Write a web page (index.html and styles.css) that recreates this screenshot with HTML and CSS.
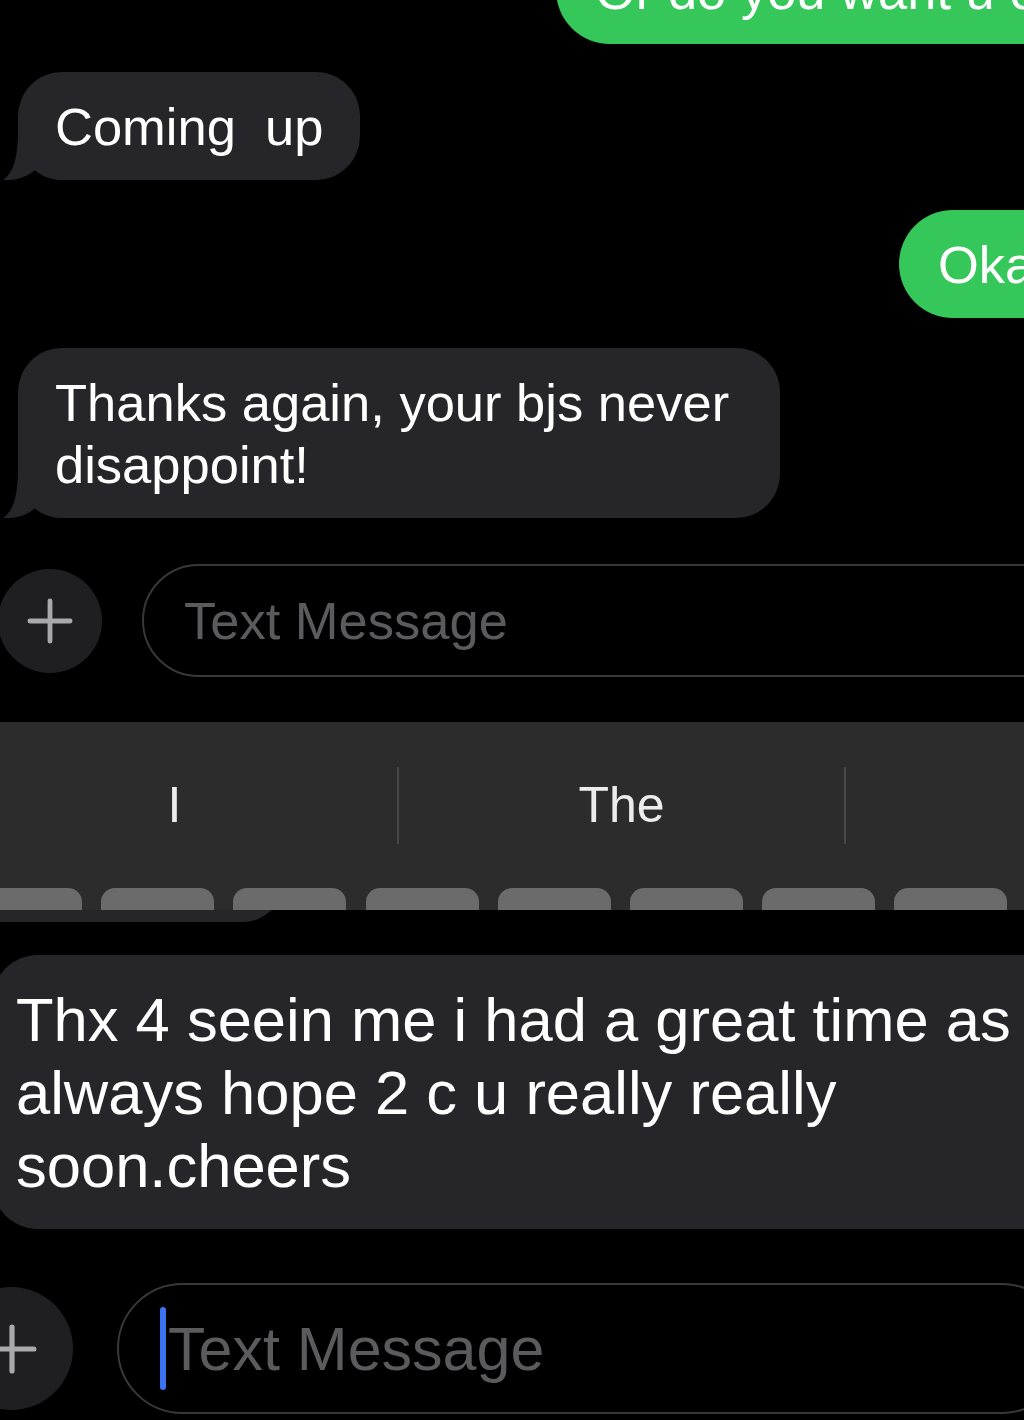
FILE: index.html
```html
<!DOCTYPE html>
<html lang="en">
<head>
    <meta charset="UTF-8">
    <meta name="viewport" content="width=device-width, initial-scale=1.0">
    <title>Messages</title>
    <link rel="stylesheet" href="styles.css">
</head>
<body>
    <div class="shot shot-top">
        <div class="thread">
            <div class="bubble out first">Or do you want u come to me</div>
            <div class="bubble in coming">
                Coming&nbsp; up
                <svg class="tail" viewBox="0 0 60 52" width="60" height="52"><path d="M16 0 C16 30 12 44 1 52 C14 53 26 49 34 41 C40 48 50 52 60 52 L60 0 Z"/></svg>
            </div>
            <div class="bubble out okay">Okay</div>
            <div class="bubble in thanks">
                Thanks again, your bjs never<br>disappoint!
                <svg class="tail" viewBox="0 0 60 52" width="60" height="52"><path d="M16 0 C16 30 12 44 1 52 C14 53 26 49 34 41 C40 48 50 52 60 52 L60 0 Z"/></svg>
            </div>
        </div>

        <div class="composer">
            <div class="plus">
                <svg viewBox="0 0 48 48" width="46" height="46"><path d="M24 3v42M3 24h42"/></svg>
            </div>
            <div class="field">Text Message</div>
        </div>

        <div class="suggest">
            <div class="word first-word">I</div>
            <div class="sep"></div>
            <div class="word">The</div>
            <div class="sep"></div>
            <div class="word"></div>
        </div>

        <div class="keys">
            <span class="key first-key"></span>
            <span class="key"></span>
            <span class="key"></span>
            <span class="key"></span>
            <span class="key"></span>
            <span class="key"></span>
            <span class="key"></span>
            <span class="key"></span>
        </div>
    </div>

    <div class="shot shot-bottom">
        <div class="prev"></div>
        <div class="bubble in big">Thx 4 seein me i had a great time as<br>always hope 2 c u really really<br>soon.cheers</div>

        <div class="composer composer-lg">
            <div class="plus">
                <svg viewBox="0 0 48 48" width="50" height="50"><path d="M24 3v42M3 24h42"/></svg>
            </div>
            <div class="field">
                <span class="cursor"></span>Text Message
            </div>
        </div>
    </div>
</body>
</html>
```

FILE: styles.css
```css
* {
    box-sizing: border-box;
}

body {
    margin: 0;
    width: 1024px;
    height: 1420px;
    overflow: hidden;
    background: #000;
    color: #fff;
    font-family: "Liberation Sans", Arial, sans-serif;
}

.shot {
    overflow: hidden;
}

.shot-top {
    height: 910px;
}

.shot-bottom {
    height: 510px;
}

/* message thread */
.thread {
    display: flex;
    flex-direction: column;
    align-items: flex-start;
}

.bubble {
    position: relative;
    z-index: 0;
    flex: none;
    padding: 24px 37px 22px;
    border-radius: 44px;
    font-size: 52.5px;
    line-height: 62px;
    white-space: nowrap;
}

.bubble.in {
    background: #262529;
    margin-left: 18px;
}

.bubble.out {
    background: #35c759;
    border-radius: 54px;
    padding-left: 39px;
}

.first {
    margin-top: -64px;
    margin-left: 556px;
}

.coming {
    margin-top: 28px;
}

.okay {
    margin-top: 30px;
    margin-left: 899px;
}

.thanks {
    margin-top: 30px;
    width: 762px;
}

.tail {
    position: absolute;
    z-index: -1;
    left: -16px;
    bottom: 0;
    fill: #262529;
}

/* input bar */
.composer {
    display: flex;
    align-items: center;
    height: 113px;
    margin-top: 46px;
}

.plus {
    flex: none;
    width: 104px;
    height: 104px;
    margin-left: -2px;
    border-radius: 50%;
    background: #1f1f21;
    display: flex;
    align-items: center;
    justify-content: center;
}

.plus svg path {
    stroke: #a9a9ab;
    stroke-width: 5;
    stroke-linecap: round;
    fill: none;
}

.field {
    flex: none;
    width: 950px;
    height: 113px;
    margin-left: 40px;
    padding-left: 40px;
    border: 2px solid #38383a;
    border-radius: 57px;
    display: flex;
    align-items: center;
    font-size: 52.5px;
    color: #5b5b5e;
}

/* keyboard */
.suggest {
    display: flex;
    align-items: center;
    height: 166px;
    margin-top: 45px;
    background: #2c2c2c;
}

.word {
    flex: none;
    width: 445px;
    text-align: center;
    font-size: 50px;
    color: #ececec;
}

.first-word {
    margin-left: -48px;
}

.sep {
    flex: none;
    width: 2px;
    height: 77px;
    background: #48484a;
}

.keys {
    display: flex;
    gap: 19.2px;
    height: 22px;
    overflow: hidden;
    background: #2c2c2c;
}

.key {
    flex: none;
    width: 113px;
    height: 40px;
    border-radius: 14px 14px 0 0;
    background: #6b6b6b;
}

.first-key {
    margin-left: -31px;
}

/* second screenshot */
.prev {
    width: 283px;
    height: 52px;
    margin-top: -40px;
    background: #262529;
    border-radius: 0 0 40px 0;
}

.bubble.big {
    margin-top: 33px;
    margin-left: -8px;
    width: 1100px;
    padding: 28px 40px 27px 24px;
    border-radius: 46px;
    font-size: 61.5px;
    line-height: 73px;
}

.composer-lg {
    height: 131px;
    margin-top: 54px;
}

.composer-lg .plus {
    width: 123px;
    height: 123px;
    margin-left: -50px;
}

.composer-lg .field {
    height: 131px;
    margin-left: 44px;
    padding-left: 41px;
    border-radius: 66px;
    font-size: 61px;
}

.cursor {
    flex: none;
    width: 6px;
    height: 83px;
    margin-right: 2px;
    border-radius: 3px;
    background: #3a74f5;
}
```
